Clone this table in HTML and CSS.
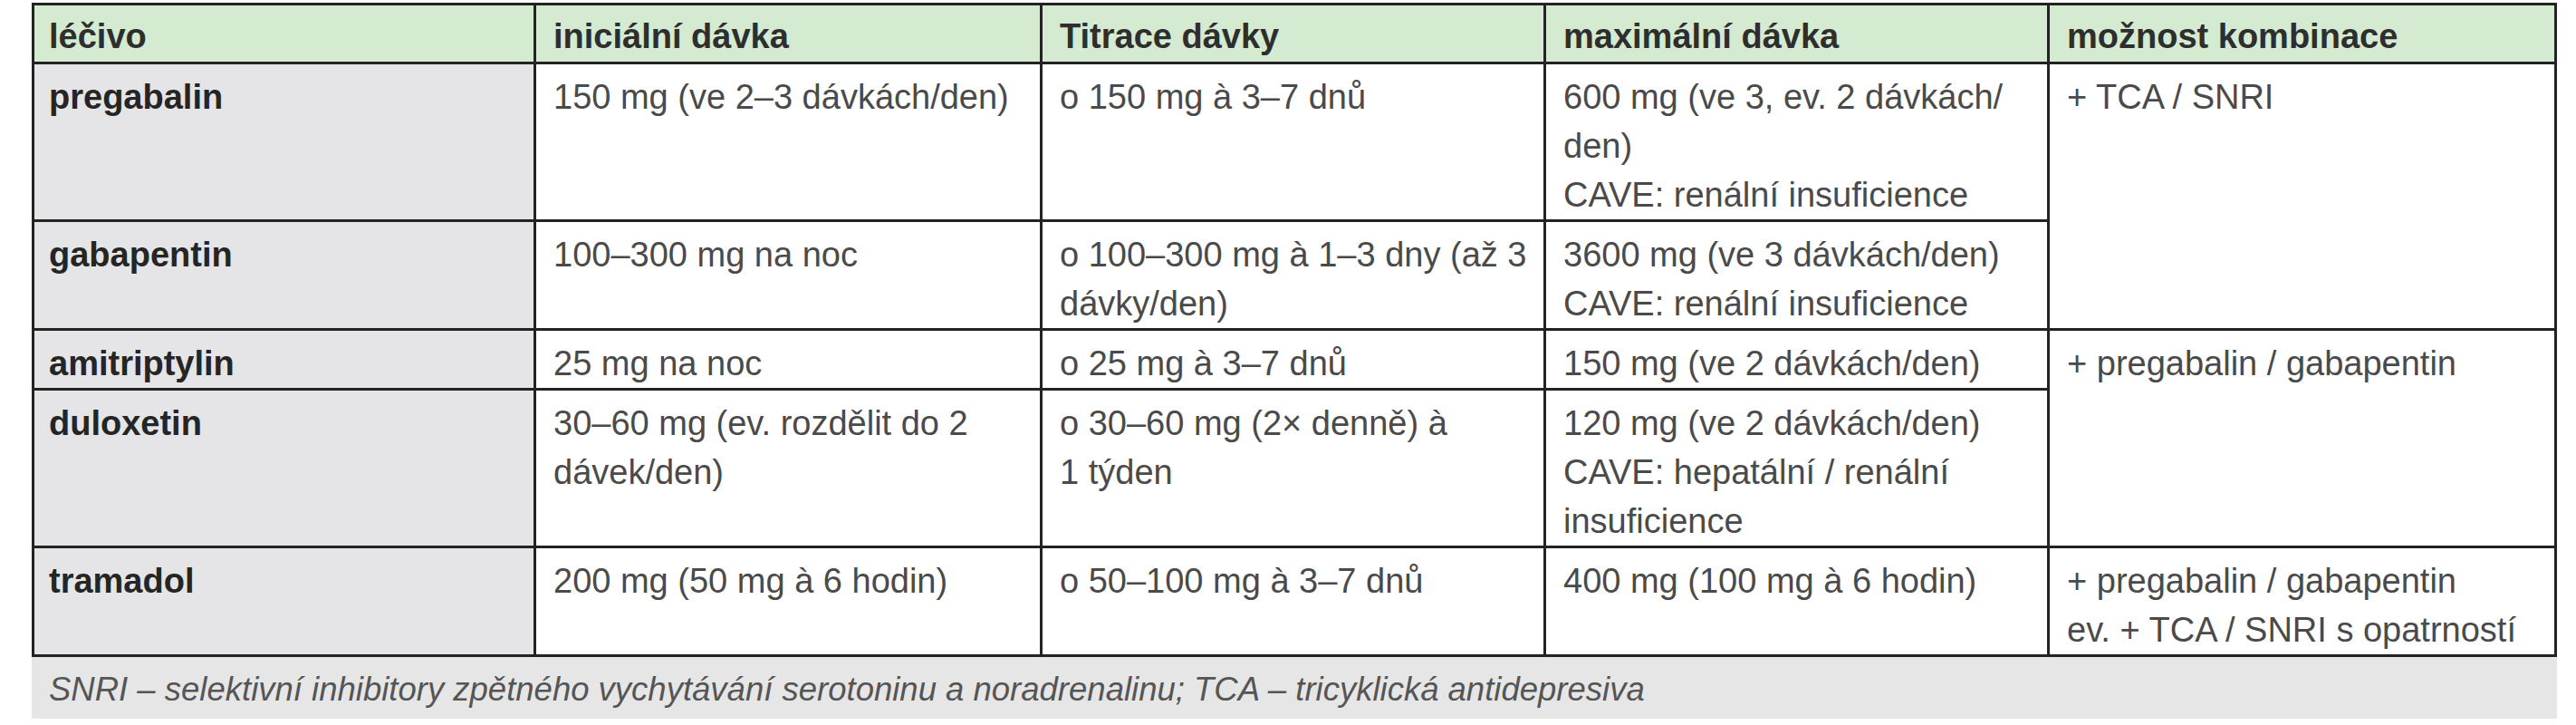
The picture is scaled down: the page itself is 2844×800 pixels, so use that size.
FILE: index.html
```html
<!DOCTYPE html>
<html lang="cs">
<head>
<meta charset="utf-8">
<title>Léčiva</title>
<link rel="stylesheet" href="styles.css">
</head>
<body>
<div class="wrap">
<table class="drugs">
  <colgroup>
    <col class="c1"><col class="c2"><col class="c3"><col class="c4"><col class="c5">
  </colgroup>
  <thead>
    <tr>
      <th>léčivo</th>
      <th>iniciální dávka</th>
      <th>Titrace dávky</th>
      <th>maximální dávka</th>
      <th>možnost kombinace</th>
    </tr>
  </thead>
  <tbody>
    <tr>
      <td class="name">pregabalin</td>
      <td>150 mg (ve 2–3 dávkách/den)</td>
      <td>o 150 mg à 3–7 dnů</td>
      <td>600 mg (ve 3, ev. 2 dávkách/<br>den)<br>CAVE: renální insuficience</td>
      <td rowspan="2">+ TCA / SNRI</td>
    </tr>
    <tr>
      <td class="name">gabapentin</td>
      <td>100–300 mg na noc</td>
      <td>o 100–300 mg à 1–3 dny (až 3<br>dávky/den)</td>
      <td>3600 mg (ve 3 dávkách/den)<br>CAVE: renální insuficience</td>
    </tr>
    <tr>
      <td class="name">amitriptylin</td>
      <td>25 mg na noc</td>
      <td>o 25 mg à 3–7 dnů</td>
      <td>150 mg (ve 2 dávkách/den)</td>
      <td rowspan="2">+ pregabalin / gabapentin</td>
    </tr>
    <tr>
      <td class="name">duloxetin</td>
      <td>30–60 mg (ev. rozdělit do 2<br>dávek/den)</td>
      <td>o 30–60 mg (2× denně) à<br>1 týden</td>
      <td>120 mg (ve 2 dávkách/den)<br>CAVE: hepatální / renální<br>insuficience</td>
    </tr>
    <tr class="last">
      <td class="name">tramadol</td>
      <td>200 mg (50 mg à 6 hodin)</td>
      <td>o 50–100 mg à 3–7 dnů</td>
      <td>400 mg (100 mg à 6 hodin)</td>
      <td>+ pregabalin / gabapentin<br>ev. + TCA / SNRI s opatrností</td>
    </tr>
  </tbody>
</table>
<div class="note">SNRI – selektivní inhibitory zpětného vychytávání serotoninu a noradrenalinu; TCA – tricyklická antidepresiva</div>
</div>
</body>
</html>
```

FILE: styles.css
```css
html, body {
  margin: 0;
  padding: 0;
  background: #ffffff;
}

body {
  font-family: "Liberation Sans", Arial, sans-serif;
  color: #4a4a4a;
}

.wrap {
  padding: 3px 0 0 35px;
  width: 2788px;
}

.drugs {
  border-collapse: separate;
  border-spacing: 0;
  table-layout: fixed;
  width: 2788px;
  border-top: 3px solid #232323;
  border-left: 3px solid #232323;
}

.c1 { width: 554px; }
.c2 { width: 559px; }
.c3 { width: 556px; }
.c4 { width: 556px; }
.c5 { width: 560px; }

.drugs th,
.drugs td {
  box-sizing: border-box;
  border-right: 3px solid #232323;
  border-bottom: 3px solid #232323;
  padding: 9px 10px 0 19px;
  font-size: 38px;
  line-height: 54px;
  text-align: left;
  vertical-align: top;
  white-space: nowrap;
  font-weight: normal;
}

.drugs th {
  background: #d4ebd2;
  color: #2e2e2e;
  font-weight: bold;
  padding-top: 7px;
  padding-bottom: 1px;
}

.drugs th:first-child,
.drugs td.name {
  padding-left: 16px;
}

.drugs td.name {
  background: #e5e5e7;
  color: #252525;
  font-weight: bold;
}

.note {
  background: #e6e6e6;
  height: 68px;
  box-sizing: border-box;
  padding: 10px 0 0 19px;
  font-size: 36.5px;
  line-height: 52px;
  font-style: italic;
  color: #555555;
  white-space: nowrap;
}
```
